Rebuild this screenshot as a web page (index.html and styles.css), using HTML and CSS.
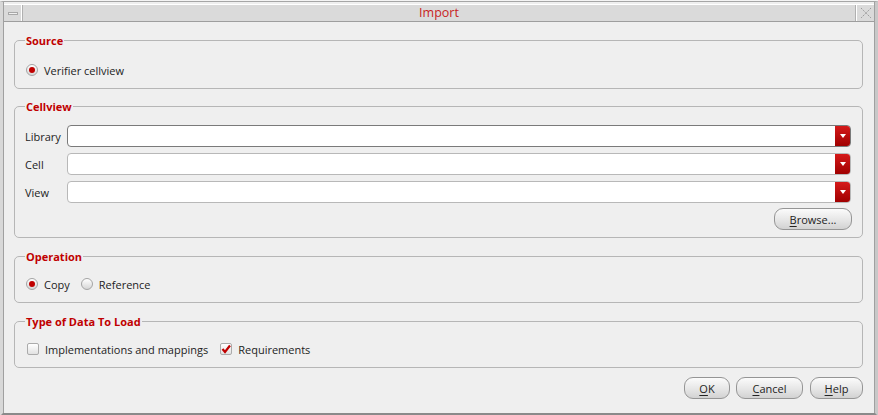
FILE: index.html
```html
<!DOCTYPE html>
<html>
<head>
<meta charset="utf-8">
<link rel="stylesheet" href="styles.css">
</head>
<body>
<div class="window">
  <div class="titlebar">
    <div class="tb-btn tb-min"><span class="min-glyph"></span></div>
    <div class="tb-title">Import</div>
    <div class="tb-btn tb-close">
      <svg width="12" height="12" viewBox="0 0 12 12"><path d="M1 1 L11 11 M11 1 L1 11" stroke="#9a9a9a" stroke-width="1" stroke-dasharray="1.5 1" fill="none"/></svg>
    </div>
  </div>
  <div class="content">
    <fieldset class="group g-source">
      <legend>Source</legend>
      <div class="row">
        <label class="opt"><span class="radio on"></span>Verifier cellview</label>
      </div>
    </fieldset>

    <fieldset class="group g-cell">
      <legend>Cellview</legend>
      <div class="field-row">
        <span class="flabel">Library</span>
        <div class="combo focus"><span class="drop"></span></div>
      </div>
      <div class="field-row">
        <span class="flabel">Cell</span>
        <div class="combo"><span class="drop"></span></div>
      </div>
      <div class="field-row">
        <span class="flabel">View</span>
        <div class="combo"><span class="drop"></span></div>
      </div>
      <div class="browse-row">
        <button class="btn browse"><u>B</u>rowse...</button>
      </div>
    </fieldset>

    <fieldset class="group g-op">
      <legend>Operation</legend>
      <div class="row">
        <label class="opt"><span class="radio on"></span>Copy</label>
        <label class="opt"><span class="radio"></span>Reference</label>
      </div>
    </fieldset>

    <fieldset class="group g-type">
      <legend>Type of Data To Load</legend>
      <div class="row">
        <label class="opt"><span class="check"></span>Implementations and mappings</label>
        <label class="opt"><span class="check on"><svg width="10" height="10" viewBox="0 0 10 10"><path d="M1.5 5 L4 8 L9 1.5" stroke="#c00000" stroke-width="2.2" fill="none"/></svg></span>Requirements</label>
      </div>
    </fieldset>

    <div class="actions">
      <button class="btn ok"><u>O</u>K</button>
      <button class="btn cancel"><u>C</u>ancel</button>
      <button class="btn help"><u>H</u>elp</button>
    </div>
  </div>
</div>
</body>
</html>
```

FILE: styles.css
```css
* { box-sizing: border-box; }
html, body { margin: 0; padding: 0; background: #f4f4f4; }
body { font-family: "Open Sans", "DejaVu Sans", sans-serif; font-size: 11px; color: #232323; }

.window {
  width: 878px;
  height: 415px;
  border-top: 1px solid #a6a6a6;
  border-left: 3px solid #d8d8d8;
  border-right: 3px solid #c8c8c8;
  border-bottom: 3px solid #8a8a8a;
  background: #efefef;
  display: flex;
  flex-direction: column;
  margin-top: 1px;
  box-shadow: inset 1px 0 0 #a0a0a0, inset -1px 0 0 #a0a0a0;
}

.titlebar {
  height: 18px;
  margin-top: 2px;
  background: #dadada;
  border-top: 1px solid #ffffff;
  border-bottom: 1px solid #9e9e9e;
  display: flex;
  align-items: stretch;
  margin-left: 1px;
  margin-right: 1px;
}
.tb-btn {
  width: 18px;
  display: flex;
  align-items: center;
  justify-content: center;
}
.tb-min { border-right: 1px solid #ffffff; box-shadow: 1px 0 0 #b0b0b0; }
.tb-close { border-left: 1px solid #ffffff; box-shadow: -1px 0 0 #b0b0b0; }
.min-glyph {
  width: 10px;
  height: 3px;
  border: 1px solid #a8a8a8;
  background: #f0f0f0;
  margin-top: 1px;
}
.tb-title {
  flex: 1;
  text-align: center;
  color: #c81e1e;
  font-size: 12.5px;
  line-height: 16px;
}

.content {
  flex: 1;
  padding: 0 12px 0 11px;
  display: flex;
  flex-direction: column;
}

.group {
  margin: 10px 0 0 0;
  padding: 0 10px 7px 10px;
  border: 1px solid #b6b6b6;
  border-radius: 5px;
  min-width: 0;
}
.g-source { margin-top: 11px; padding-bottom: 8px; }
.group legend {
  padding: 0 1px;
  margin-left: 0px;
  color: #c00000;
  font-weight: bold;
  font-size: 11px;
  line-height: 15px;
}

.row {
  display: flex;
  align-items: center;
  height: 20px;
  gap: 11px;
  padding-left: 1px;
}
.g-source .row { margin-top: 12px; }
.g-op { margin-top: 11px; padding-bottom: 8px; }
.g-op .row { margin-top: 10px; }
.g-type { margin-top: 11px; padding-bottom: 8px; }
.g-type .row { margin-top: 10px; }

.opt { display: flex; align-items: center; gap: 6px; }

.radio {
  width: 12px;
  height: 12px;
  border-radius: 50%;
  border: 1px solid #a4a4a4;
  background: linear-gradient(#ffffff, #d6d6d6);
  display: flex;
  align-items: center;
  justify-content: center;
}
.radio.on::after {
  content: "";
  width: 6px;
  height: 6px;
  border-radius: 50%;
  background: #c00000;
}

.check {
  width: 12px;
  height: 12px;
  border: 1px solid #ababab;
  border-radius: 2px;
  background: linear-gradient(#ffffff, #e2e2e2);
  display: flex;
  align-items: center;
  justify-content: center;
  margin-left: 1px;
}

.field-row {
  display: flex;
  align-items: center;
  height: 22px;
  margin-top: 6px;
}
.g-cell .field-row:first-of-type { margin-top: 11px; }
.flabel { width: 42px; }
.combo {
  flex: 1;
  height: 22px;
  background: #ffffff;
  border: 1px solid #b8b8b8;
  border-radius: 4px;
  display: flex;
  justify-content: flex-end;
  overflow: hidden;
  margin-right: 1px;
}
.combo.focus { border-color: #7a7a7a; }
.drop {
  width: 15px;
  height: 100%;
  background: linear-gradient(#d51a1a, #a00000);
  display: flex;
  align-items: center;
  justify-content: center;
}
.drop::after {
  content: "";
  border-left: 3px solid transparent;
  border-right: 3px solid transparent;
  border-top: 4px solid #ffffff;
}

.browse-row {
  display: flex;
  justify-content: flex-end;
  margin-top: 5px;
}

.btn {
  font-family: "Open Sans", "DejaVu Sans", sans-serif;
  font-size: 11px;
  color: #232323;
  height: 22px;
  padding: 0;
  border: 1px solid #959595;
  border-radius: 9px;
  background: linear-gradient(#fbfbfb, #e6e6e6 55%, #d2d2d2);
  cursor: default;
}
.btn u { text-underline-offset: 2px; }
.browse { width: 78px; }

.actions {
  display: flex;
  justify-content: flex-end;
  gap: 6px;
  margin-top: 9px;
}
.ok { width: 46px; }
.cancel { width: 67px; margin-right: 1px; }
.help { width: 53px; }
```
